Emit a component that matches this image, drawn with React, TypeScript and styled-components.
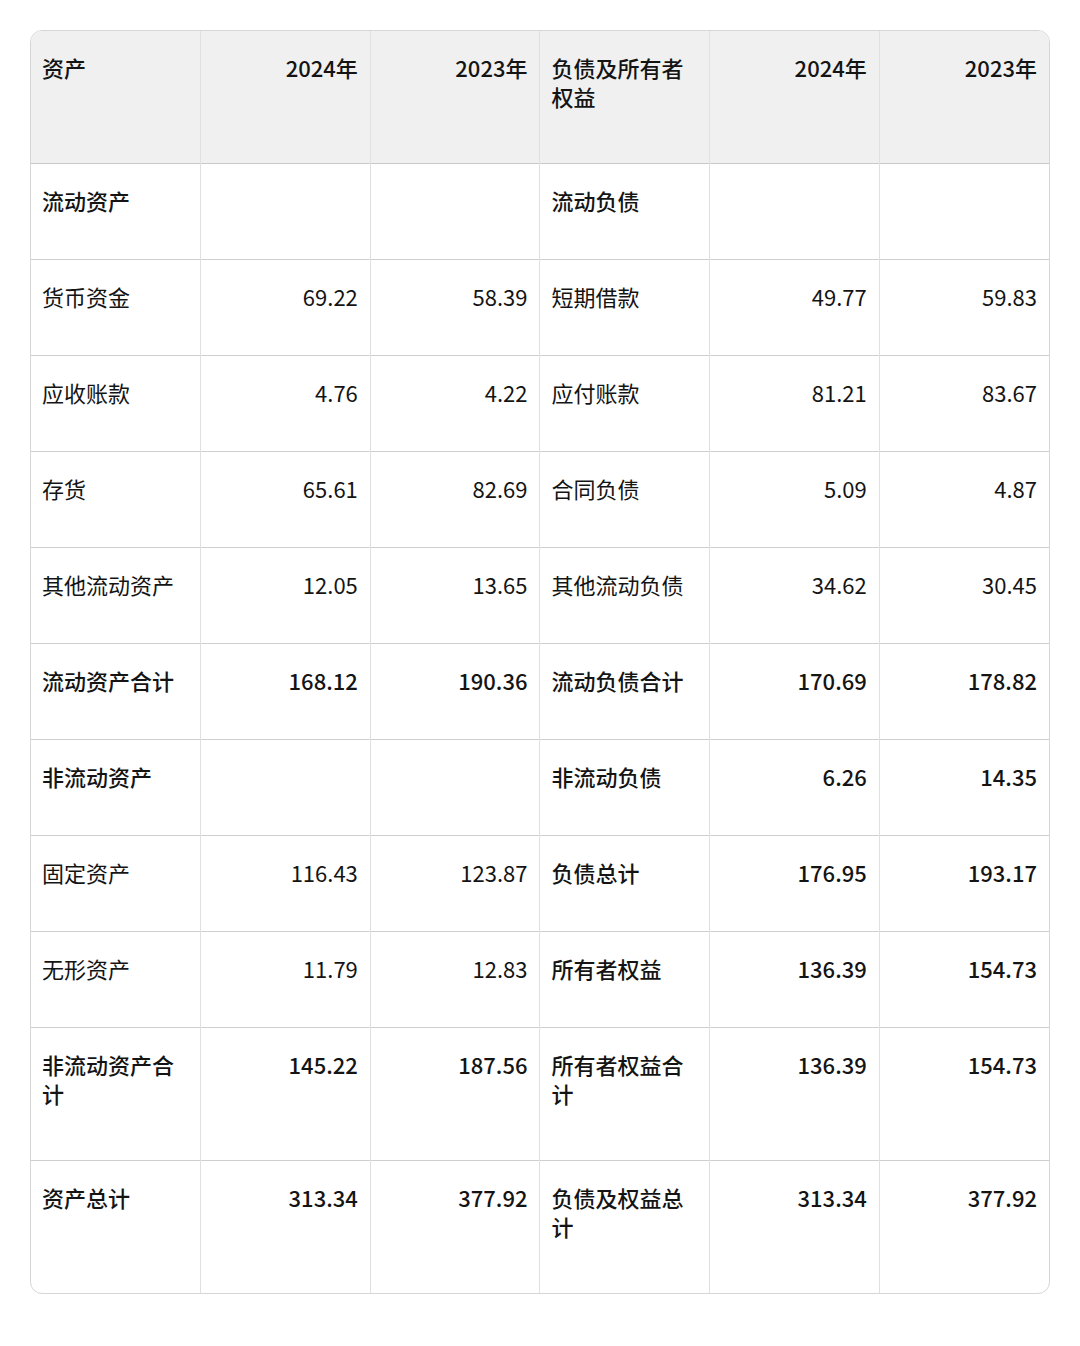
import React from "react";
import styled, { createGlobalStyle } from "styled-components";

const GlobalStyle = createGlobalStyle`
  html, body {
    margin: 0;
    padding: 0;
    background: #ffffff;
  }
  body {
    font-family: "Noto Sans CJK SC", "Noto Sans", sans-serif;
    color: #161616;
  }
`;

type Cell = { text: string; bold?: boolean };
type Row = { cells: Cell[]; tall?: boolean };

const c = (text: string, bold = false): Cell => ({ text, bold });

const header = ["资产", "2024年", "2023年", "负债及所有者权益", "2024年", "2023年"];

const rows: Row[] = [
  { cells: [c("流动资产", true), c(""), c(""), c("流动负债", true), c(""), c("")] },
  { cells: [c("货币资金"), c("69.22"), c("58.39"), c("短期借款"), c("49.77"), c("59.83")] },
  { cells: [c("应收账款"), c("4.76"), c("4.22"), c("应付账款"), c("81.21"), c("83.67")] },
  { cells: [c("存货"), c("65.61"), c("82.69"), c("合同负债"), c("5.09"), c("4.87")] },
  { cells: [c("其他流动资产"), c("12.05"), c("13.65"), c("其他流动负债"), c("34.62"), c("30.45")] },
  {
    cells: [
      c("流动资产合计", true),
      c("168.12", true),
      c("190.36", true),
      c("流动负债合计", true),
      c("170.69", true),
      c("178.82", true),
    ],
  },
  {
    cells: [
      c("非流动资产", true),
      c(""),
      c(""),
      c("非流动负债", true),
      c("6.26", true),
      c("14.35", true),
    ],
  },
  {
    cells: [
      c("固定资产"),
      c("116.43"),
      c("123.87"),
      c("负债总计", true),
      c("176.95", true),
      c("193.17", true),
    ],
  },
  {
    cells: [
      c("无形资产"),
      c("11.79"),
      c("12.83"),
      c("所有者权益", true),
      c("136.39", true),
      c("154.73", true),
    ],
  },
  {
    tall: true,
    cells: [
      c("非流动资产合计", true),
      c("145.22", true),
      c("187.56", true),
      c("所有者权益合计", true),
      c("136.39", true),
      c("154.73", true),
    ],
  },
  {
    tall: true,
    cells: [
      c("资产总计", true),
      c("313.34", true),
      c("377.92", true),
      c("负债及权益总计", true),
      c("313.34", true),
      c("377.92", true),
    ],
  },
];

const Page = styled.div`
  padding: 30px 30px 0 30px;
`;

const Frame = styled.div`
  box-sizing: border-box;
  width: 1020px;
  border: 1px solid #d6d6d6;
  border-radius: 12px;
  overflow: hidden;
`;

const Table = styled.table`
  width: 100%;
  border-collapse: collapse;
  table-layout: fixed;
`;

const Tr = styled.tr<{ $tall?: boolean }>`
  height: ${p => (p.$tall ? 133 : 96)}px;
  border-bottom: 1px solid #cfcfcf;
  &:last-child {
    border-bottom: none;
  }
`;

const HeadTr = styled.tr`
  height: 132px;
  background: #f0f0f0;
  border-bottom: 1px solid #c9c9c9;
`;

const Td = styled.td<{ $num?: boolean; $bold?: boolean }>`
  vertical-align: top;
  padding: 22px 12px 0 11px;
  font-size: 22px;
  line-height: 29px;
  text-align: ${p => (p.$num ? "right" : "left")};
  font-weight: ${p => (p.$bold ? 500 : 400)};
  color: #141414;
  border-right: 1px solid #e0e0e0;
  &:last-child {
    border-right: none;
  }
`;

const Th = styled(Td).attrs({ as: "th" })``;

const isNum = (i: number) => i !== 0 && i !== 3;

export default function App() {
  return (
    <>
      <GlobalStyle />
      <Page>
        <Frame>
          <Table>
            <thead>
              <HeadTr>
                {header.map((h, i) => (
                  <Th key={i} $num={isNum(i)} $bold>
                    {h}
                  </Th>
                ))}
              </HeadTr>
            </thead>
            <tbody>
              {rows.map((r, ri) => (
                <Tr key={ri} $tall={r.tall}>
                  {r.cells.map((cell, ci) => (
                    <Td key={ci} $num={isNum(ci)} $bold={cell.bold}>
                      {cell.text}
                    </Td>
                  ))}
                </Tr>
              ))}
            </tbody>
          </Table>
        </Frame>
      </Page>
    </>
  );
}
